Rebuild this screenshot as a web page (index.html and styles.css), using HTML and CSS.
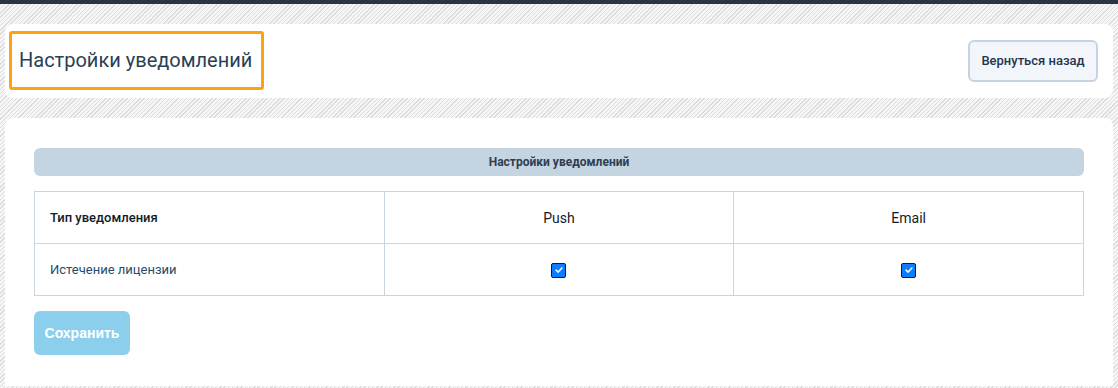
FILE: index.html
```html
<!DOCTYPE html>
<html lang="ru">
<head>
    <meta charset="UTF-8">
    <meta name="viewport" content="width=device-width, initial-scale=1.0">
    <title>Настройки уведомлений</title>
    <link rel="stylesheet" href="styles.css">
</head>
<body>

    <div class="top-bar"></div>

    <div class="page">
        <!-- Page header -->
        <div class="card header-card">
            <h1 class="page-title">Настройки уведомлений</h1>
            <button class="back-btn">Вернуться назад</button>
        </div>

        <!-- Settings -->
        <div class="card content-card">
            <div class="section-title">Настройки уведомлений</div>

            <table class="settings-table">
                <thead>
                    <tr>
                        <th class="type-col">Тип уведомления</th>
                        <th>Push</th>
                        <th>Email</th>
                    </tr>
                </thead>
                <tbody>
                    <tr>
                        <td class="type-col">Истечение лицензии</td>
                        <td><span class="check"><svg viewBox="0 0 12 12" width="10" height="10"><path d="M2.5 6.2 L5 8.5 L9.5 3.5" fill="none" stroke="#fff" stroke-width="1.8" stroke-linecap="round" stroke-linejoin="round"/></svg></span></td>
                        <td><span class="check"><svg viewBox="0 0 12 12" width="10" height="10"><path d="M2.5 6.2 L5 8.5 L9.5 3.5" fill="none" stroke="#fff" stroke-width="1.8" stroke-linecap="round" stroke-linejoin="round"/></svg></span></td>
                    </tr>
                </tbody>
            </table>

            <button class="save-btn">Сохранить</button>
        </div>
    </div>

</body>
</html>
```

FILE: styles.css
```css
/* General body styling */
body {
    margin: 0;
    font-family: Roboto, "Noto Sans", sans-serif;
    color: #2c3e50;
    background-color: #eeeeee;
    background-image: repeating-linear-gradient(135deg, #dcdcdc 0, #dcdcdc 1px, #f6f6f6 1px, #f6f6f6 3px);
    height: 388px;
    overflow: hidden;
}

.top-bar {
    height: 4px;
    background: #2b3443;
}

.page {
    padding: 20px 5px 0;
    display: flex;
    flex-direction: column;
    gap: 20px;
}

/* Cards */
.card {
    background: #fff;
    border-radius: 8px;
}

.header-card {
    display: flex;
    align-items: center;
    justify-content: space-between;
    padding: 7px 15px 8px 4px;
}

.page-title {
    margin: 0;
    font-size: 20px;
    font-weight: 400;
    color: #2a3f55;
    border: 3px solid #ffa20c;
    border-radius: 3px;
    padding: 0 10px 0 7px;
    height: 53px;
    line-height: 53px;
    width: 232px;
    white-space: nowrap;
}

.back-btn {
    font-family: Roboto, sans-serif;
    font-size: 13px;
    font-weight: 500;
    color: #1f3550;
    background: #f2f6fa;
    border: 2px solid #c6d4e1;
    border-radius: 6px;
    width: 130px;
    height: 42px;
    padding: 0;
}

.content-card {
    padding: 30px 29px 31px;
    border-radius: 8px 8px 0 0;
}

/* Section title bar */
.section-title {
    background: #c5d4e1;
    border-radius: 6px;
    height: 28px;
    line-height: 28px;
    text-align: center;
    font-size: 12px;
    font-weight: 700;
    color: #2f3e52;
}

/* Table */
.settings-table {
    width: 100%;
    margin-top: 15px;
    border-collapse: collapse;
    table-layout: fixed;
}

.settings-table th,
.settings-table td {
    border: 1px solid #c9d5e1;
    height: 51px;
    padding: 0 15px;
    text-align: center;
    font-size: 13px;
}

.settings-table th {
    font-weight: 400;
    font-size: 14px;
    color: #111c28;
}

.settings-table td {
    color: #2a4a6a;
}

.settings-table .type-col {
    text-align: left;
}

.settings-table th.type-col {
    font-weight: 500;
    font-size: 13px;
}

/* Checkbox */
.check {
    display: inline-flex;
    align-items: center;
    justify-content: center;
    width: 13px;
    height: 13px;
    background: #0b7dff;
    border: 1px solid #1a1a1a;
    border-radius: 2px;
    vertical-align: middle;
}

/* Save button */
.save-btn {
    margin-top: 15px;
    width: 96px;
    height: 44px;
    border: none;
    border-radius: 6px;
    background: #8ccfed;
    color: #fff;
    font-family: "Liberation Sans", Arial, sans-serif;
    font-size: 14px;
    font-weight: 700;
    padding: 0;
}
```
